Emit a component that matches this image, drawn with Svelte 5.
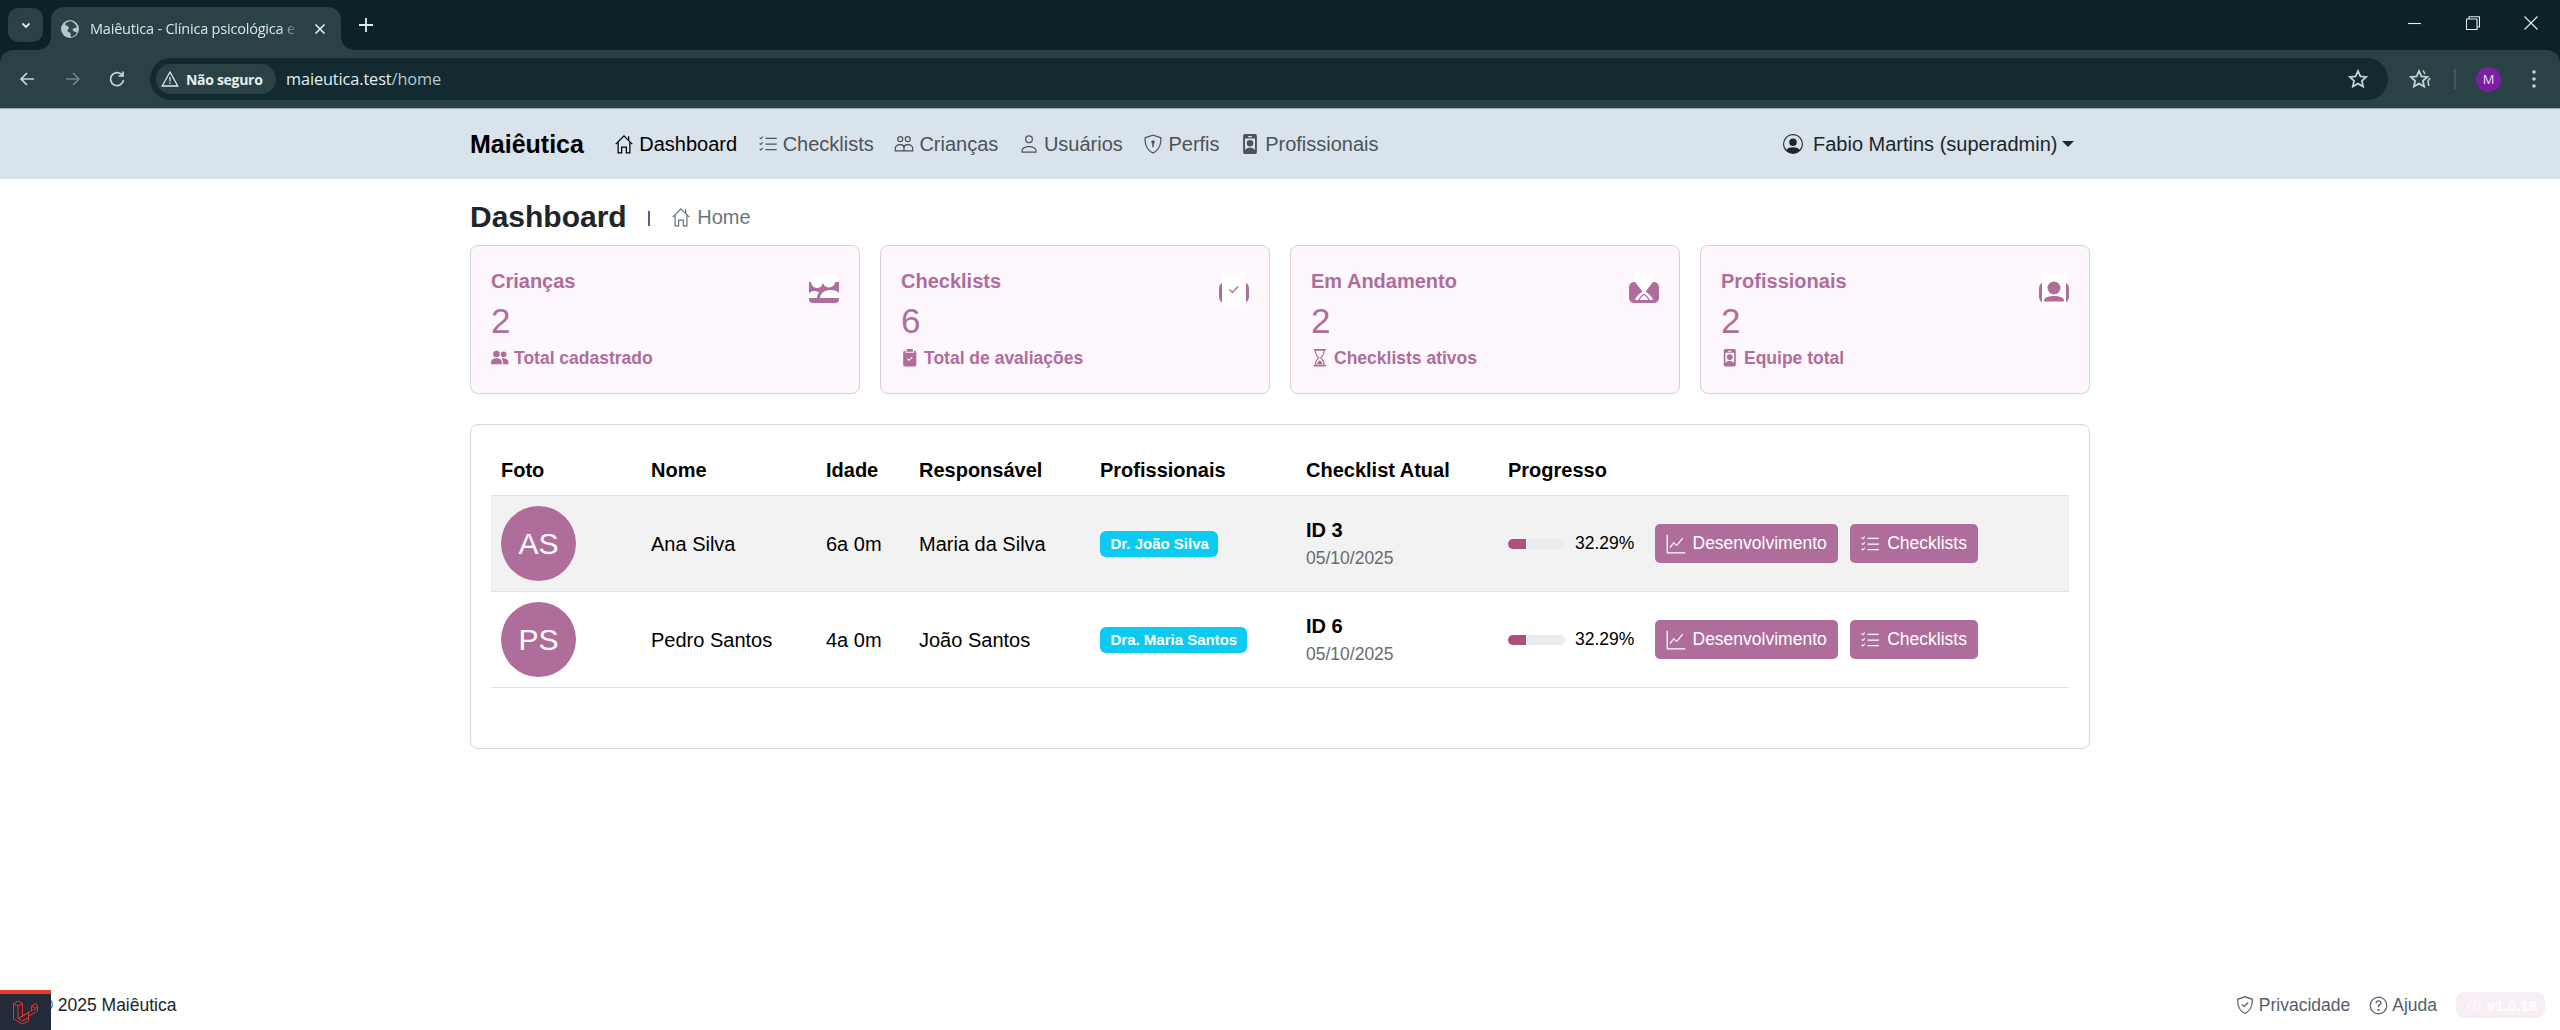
<script>
  const stats = [
    { t: 'Crianças', n: '2', s: 'Total cadastrado', i: 'people' },
    { t: 'Checklists', n: '6', s: 'Total de avaliações', i: 'clip' },
    { t: 'Em Andamento', n: '2', s: 'Checklists ativos', i: 'hour' },
    { t: 'Profissionais', n: '2', s: 'Equipe total', i: 'badge' }
  ];
  const rows = [
    { ini: 'AS', nome: 'Ana Silva', idade: '6a 0m', resp: 'Maria da Silva', prof: 'Dr. João Silva', id: 'ID 3' },
    { ini: 'PS', nome: 'Pedro Santos', idade: '4a 0m', resp: 'João Santos', prof: 'Dra. Maria Santos', id: 'ID 6' }
  ];
  const nav = [
    { l: 'Dashboard', i: 'house', active: true },
    { l: 'Checklists', i: 'list' },
    { l: 'Crianças', i: 'kids' },
    { l: 'Usuários', i: 'user' },
    { l: 'Perfis', i: 'shield' },
    { l: 'Profissionais', i: 'badgeSm' }
  ];
</script>

{#snippet icon(name, cls)}
  <svg class={cls} viewBox="0 0 16 16" fill="currentColor" aria-hidden="true">
    {#if name === 'house'}
      <path d="M8 .8 1 7.800l.6.6L2.800 7.300V15.500h3.800v-4.500h2.800v4.500h3.800V7.300l1.200 1.100.6-.6-2.800-2.800V1.800h-1v2.300L8 .8Zm0 1.300 4.200 4.200v8.200h-1.800V10H5.600v4.500H3.800V6.300L8 2.100Z"/>
    {:else if name === 'list'}
      <path d="M6 3h9v1H6zM6 7.500h9v1H6zM6 12h9v1H6z"/>
      <path d="m1 3.200.6-.6.6.6L3.600 1.800l.6.6-2 2zM1 7.700l.6-.6.6.6 1.400-1.400.6.6-2 2zM1 12.200l.6-.6.6.6 1.400-1.400.6.6-2 2z"/>
    {:else if name === 'kids'}
      <path fill-rule="evenodd" d="M5 1.500a2.500 2.500 0 1 1 0 5 2.500 2.500 0 0 1 0-5Zm0 1a1.500 1.500 0 1 0 0 3 1.500 1.500 0 0 0 0-3ZM11 1.500a2.500 2.500 0 1 1 0 5 2.500 2.500 0 0 1 0-5Zm0 1a1.500 1.500 0 1 0 0 3 1.500 1.500 0 0 0 0-3ZM.5 14v-2.500C.5 9.500 2.500 8 5 8c1.200 0 2.300.35 3 1 .7-.65 1.800-1 3-1 2.500 0 4.500 1.500 4.500 3.500V14H.5Zm1-1h6v-1.500C7.500 10 6.500 9 5 9s-3.500 1-3.500 2.500V13Zm7 0h6v-1.500C14.500 10 12.500 9 11 9s-2.500 1-2.500 2.500V13Z"/>
    {:else if name === 'user'}
      <path fill-rule="evenodd" d="M8 1a3.200 3.200 0 1 1 0 6.400A3.200 3.200 0 0 1 8 1Zm0 1a2.200 2.200 0 1 0 0 4.400A2.200 2.200 0 0 0 8 2ZM2 15v-1.900C2 10.800 4.800 9.500 8 9.500s6 1.300 6 3.600V15H2Zm1-1h10v-.9c0-1.400-2.200-2.600-5-2.600s-5 1.200-5 2.600v.9Z"/>
    {:else if name === 'shield'}
      <path fill-rule="evenodd" d="M8 .3 14.800 2.600c.3 5.300-1.300 10.500-6.800 13.100C2.500 13.100.9 7.900 1.200 2.600L8 .3Zm0 1.100L2.200 3.300c-.2 4.600 1.200 9 5.800 11.300 4.600-2.300 6-6.700 5.800-11.300L8 1.400Z"/>
      <circle cx="8" cy="6.300" r="1.400"/><rect x="7.400" y="7" width="1.200" height="3.500"/>
    {:else if name === 'shieldCheck'}
      <path fill-rule="evenodd" d="M8 .8 14.300 3c.3 4.800-1.200 9.800-6.300 12.200C2.900 12.800 1.400 7.800 1.700 3L8 .8Zm0 1.100L2.700 3.700c-.2 4.200 1.100 8.400 5.300 10.400 4.200-2 5.500-6.200 5.300-10.400L8 1.900Z"/>
      <path d="m5.200 7.800.7-.7 1.400 1.400 2.900-2.900.7.700-3.600 3.600z"/>
    {:else if name === 'badgeSm'}
      <path fill-rule="evenodd" d="M4 0h8a1.500 1.500 0 0 1 1.500 1.500v13A1.500 1.500 0 0 1 12 16H4a1.500 1.500 0 0 1-1.500-1.500v-13A1.500 1.500 0 0 1 4 0Zm2.500 1.500v1h3v-1h-3ZM4 3.500V12.800C5 11.500 6.400 11 8 11s3 .5 4 1.800V3.500H4Zm4 1.300a2.600 2.600 0 1 1 0 5.200 2.600 2.600 0 0 1 0-5.200Z"/>
    {:else if name === 'peopleFill'}
      <circle cx="5" cy="4.500" r="3"/><circle cx="11.500" cy="4.800" r="2.600"/>
      <path d="M0 14v-1.500C0 10 2 8.500 5 8.500s5 1.500 5 4V14H0ZM11 14v-1.500c0-1.500-.5-2.800-1.500-3.700.6-.2 1.300-.3 2-.3 2.500 0 4.500 1.500 4.500 3.800V14h-5Z"/>
    {:else if name === 'clipFill'}
      <path fill-rule="evenodd" d="M6 0h4a1 1 0 0 1 1 1v1.500H5V1a1 1 0 0 1 1-1ZM4 1.500V3.500h8v-2h.5A1.500 1.500 0 0 1 14 3v11.500a1.500 1.500 0 0 1-1.500 1.500h-9A1.500 1.500 0 0 1 2 14.500V3a1.500 1.500 0 0 1 1.500-1.500H4Zm6.600 6.200-.7-.7-2.600 2.600-1.200-1.200-.7.700 1.900 1.900 3.300-3.300Z"/>
    {:else if name === 'hourFill'}
      <path d="M2.500 0h11v1.500h-1c0 3-1.500 5.300-3 6.500 1.500 1.200 3 3.500 3 6.500h1V16h-11v-1.500h1c0-3 1.500-5.300 3-6.500-1.500-1.200-3-3.500-3-6.500h-1V0Zm2.100 1.500c0 2.700 1.400 4.800 2.900 6 .4.300.4.700 0 1-1.500 1.200-2.900 3.300-2.900 6h6.800c0-2.700-1.400-4.800-2.900-6-.4-.3-.4-.7 0-1 1.500-1.200 2.900-3.300 2.900-6H4.600Zm.9 12.500c.2-1.500 1.300-2.900 2.500-3.700 1.200.8 2.300 2.200 2.500 3.700h-5Z"/>
    {:else if name === 'chart'}
      <path d="M.5.500h1V14.500h14v1H.5z"/>
      <path d="m3.500 11.300-.7-.7 3.400-4.400 2.300 2.300L13 3l.8.6L8.600 9.700 6.300 7.500z"/>
    {:else if name === 'personCircle'}
      <path fill-rule="evenodd" d="M8 0a8 8 0 1 1 0 16A8 8 0 0 1 8 0Zm0 1a7 7 0 0 0-5.300 11.600C3.700 11.100 5.700 10.500 8 10.500s4.300.6 5.300 2.100A7 7 0 0 0 8 1Zm0 2.500a3 3 0 1 1 0 6 3 3 0 0 1 0-6Z"/>
    {:else if name === 'help'}
      <path fill-rule="evenodd" d="M8 .5a7.500 7.500 0 1 1 0 15 7.500 7.500 0 0 1 0-15Zm0 1a6.500 6.500 0 1 0 0 13 6.500 6.500 0 0 0 0-13Z"/>
      <path d="M5.400 6c0-1.500 1.100-2.400 2.600-2.400s2.600.9 2.600 2.200c0 1-.6 1.500-1.300 2-.6.400-.8.700-.8 1.300v.3H7.400V9c0-1 .4-1.500 1.100-2 .6-.4.9-.7.900-1.200 0-.6-.6-1.100-1.400-1.100s-1.400.5-1.400 1.300H5.400Z"/>
      <circle cx="8" cy="11.700" r=".9"/>
    {:else if name === 'code'}
      <path d="M5 4.500 1.500 8 5 11.500l-.7.700L.1 8l4.200-4.200zM11 4.500 14.500 8 11 11.500l.7.700L15.900 8l-4.200-4.200zM9.500 2l1 .2L6.500 14l-1-.2z"/>
    {/if}
  </svg>
{/snippet}

{#snippet statIcon(name)}
  <svg class="stat-icon" viewBox="0 0 30 36" aria-hidden="true">
    {#if name === 'people'}
      <path class="mv" d="M0 9h30v17a4 4 0 0 1-4 4H4a4 4 0 0 1-4-4z"/>
      <circle class="wh" cx="8" cy="9" r="6"/><circle class="wh" cx="20" cy="8" r="6.500"/>
      <path class="wh" d="M11 25c0-4 4-8 10-8s9 2 9 4v4z"/>
      <path class="wh" d="M0 25v-4c0-1 2-3 5-3 2 0 4 .5 5 1.500-1 1-2 3-2 5.500z"/>
    {:else if name === 'clip'}
      <rect class="mv" x="0" y="9" width="30" height="21" rx="6"/>
      <rect class="wh" x="3" y="0" width="24" height="32" rx="3"/>
      <path class="ck" d="m10.500 16.500 3 3 5.500-6"/>
    {:else if name === 'hour'}
      <rect class="mv" x="0" y="9" width="30" height="21" rx="5"/>
      <path class="wh" d="M6 0h18v9H6z"/>
      <path class="wh" d="M6 9h18L16.500 18.500c4 2.500 7 6 7.500 8.500H6c.5-2.500 3.500-6 7.500-8.500z"/>
      <path class="mv" d="M15 20.500c-3 2-5 4.200-5.600 6.500h1.400c.8-2 2.400-3.800 4.200-5 1.800 1.200 3.400 3 4.200 5h1.400c-.6-2.300-2.600-4.500-5.600-6.500z"/>
    {:else if name === 'badge'}
      <rect class="mv" x="0" y="9" width="30" height="21" rx="6"/>
      <rect class="wh" x="3" y="0" width="24" height="32" rx="3"/>
      <circle class="mv" cx="15" cy="15" r="6.500"/>
      <path class="mv" d="M5 28.500v-1c0-3 4.500-4.500 10-4.500s10 1.500 10 4.500v1z"/>
    {/if}
  </svg>
{/snippet}

<div class="page">
  <header class="chrome">
    <div class="tabstrip">
      <button class="tabsearch" aria-label="Pesquisar guias">
        <svg viewBox="0 0 12 12" width="12" height="12"><path d="M2.500 4.500 6 8l3.500-3.500" fill="none" stroke="#e2ecee" stroke-width="1.800"/></svg>
      </button>
      <div class="tab">
        <svg class="favicon" viewBox="0 0 18 18"><circle cx="9" cy="9" r="9" fill="#b8c6c9"/><path d="M9 1c-2 1-4 1.500-5 3 1 2 3 2 4 3.500C8 9 6 9.500 6.500 11c1 1.500 2.500 1 3 2.500.3 1.200 0 2.500.3 3.500 3-.5 5-2 6-4.500-1.500-1-3-.5-4-2-.8-1.200.5-2.500 2-2.500.8 0 1.700-.5 2-1-1-3-3.800-5.500-6.800-6z" fill="#2a4146" opacity=".95"/></svg>
        <span class="tab-title">Maiêutica - Clínica psicológica e</span>
        <svg class="tab-x" viewBox="0 0 12 12" width="12" height="12"><path d="M1.500 1.500l9 9M10.500 1.500l-9 9" stroke="#e2ecee" stroke-width="1.700"/></svg>
      </div>
      <svg class="newtab" viewBox="0 0 14 14" width="14" height="14"><path d="M7 0v14M0 7h14" stroke="#e2ecee" stroke-width="1.800"/></svg>
      <div class="win">
        <svg viewBox="0 0 14 14" width="14" height="14"><path d="M0 7.500h13" stroke="#e8eeee" stroke-width="1.100"/></svg>
        <svg viewBox="0 0 14 14" width="14" height="14"><path d="M.5 3h10.500v10.500H.5zM3 3V.7h10.500v10.300H11" fill="none" stroke="#e8eeee" stroke-width="1.100"/></svg>
        <svg viewBox="0 0 14 14" width="14" height="14"><path d="M.5.5l13 13M13.500.5l-13 13" stroke="#e8eeee" stroke-width="1.100"/></svg>
      </div>
    </div>
    <div class="toolbar">
      <svg class="tb" viewBox="0 0 18 18"><path d="M16 9H3M9 3 3 9l6 6" fill="none" stroke="#c9d6d8" stroke-width="1.700"/></svg>
      <svg class="tb" viewBox="0 0 18 18"><path d="M2 9h13M9 3l6 6-6 6" fill="none" stroke="#6f8286" stroke-width="1.700"/></svg>
      <svg class="tb" viewBox="0 0 18 18"><path d="M14.500 5.500A6.500 6.500 0 1 0 15.500 10M15 1.500v4.500h-4.500" fill="none" stroke="#c9d6d8" stroke-width="1.700"/></svg>
      <div class="omni">
        <div class="chip">
          <svg viewBox="0 0 18 18" width="18" height="18"><path d="M9 2 1.200 16h15.600zM9 7v4.500M9 12.500v1.500" fill="none" stroke="#dfe8ea" stroke-width="1.300"/></svg>
          <span>Não seguro</span>
        </div>
        <span class="url"><span class="host">maieutica.test</span>/home</span>
        <svg class="star" viewBox="0 0 20 20"><path d="M10 2l2.400 5.300 5.800.6-4.300 3.900 1.200 5.700L10 14.600l-5.100 2.900 1.200-5.700L1.800 7.900l5.800-.6z" fill="none" stroke="#c4d2d4" stroke-width="1.800"/></svg>
      </div>
      <svg class="starlist" viewBox="0 0 24 20"><path d="M10 2l2.400 5.300 5.800.6-4.300 3.900 1.200 5.700L10 14.600l-5.100 2.900 1.200-5.700L1.800 7.900l5.800-.6z" fill="none" stroke="#c4d2d4" stroke-width="1.800"/><path d="M14 1.500l2 3.500M21 9l-2 3 .8 5" fill="none" stroke="#c4d2d4" stroke-width="1.500"/></svg>
      <span class="tb-sep"></span>
      <span class="profile">M</span>
      <svg class="dots" viewBox="0 0 4 18"><circle cx="2" cy="2" r="1.800"/><circle cx="2" cy="9" r="1.800"/><circle cx="2" cy="16" r="1.800"/></svg>
    </div>
  </header>

  <nav class="navbar">
    <div class="container nav-inner">
      <span class="brand">Maiêutica</span>
      <ul class="links">
        {#each nav as n}
          <li class:active={n.active}>{@render icon(n.i, 'ic')}<span>{n.l}</span></li>
        {/each}
      </ul>
      <div class="usermenu">
        {@render icon('personCircle', 'ic')}
        <span>Fabio Martins (superadmin)</span>
        <i class="caret"></i>
      </div>
    </div>
  </nav>

  <main class="container main">
    <div class="title-row">
      <h1>Dashboard</h1>
      <span class="vr"></span>
      <span class="crumb">{@render icon('house', 'ic')}Home</span>
    </div>

    <section class="stats">
      {#each stats as s}
        <article class="stat">
          <div class="stat-text">
            <div class="stat-title">{s.t}</div>
            <div class="stat-num">{s.n}</div>
            <div class="stat-sub">
              {@render icon(s.i === 'people' ? 'peopleFill' : s.i === 'clip' ? 'clipFill' : s.i === 'hour' ? 'hourFill' : 'badgeSm', 'ic-sm')}
              <span>{s.s}</span>
            </div>
          </div>
          {@render statIcon(s.i)}
        </article>
      {/each}
    </section>

    <section class="tablecard">
      <table>
        <colgroup>
          <col style="width:150px" /><col style="width:175px" /><col style="width:93px" /><col style="width:181px" /><col style="width:206px" /><col style="width:202px" /><col style="width:147px" /><col />
        </colgroup>
        <thead>
          <tr><th>Foto</th><th>Nome</th><th>Idade</th><th>Responsável</th><th>Profissionais</th><th>Checklist Atual</th><th>Progresso</th><th></th></tr>
        </thead>
        <tbody>
          {#each rows as r, idx}
            <tr class:odd={idx === 0}>
              <td><span class="avatar">{r.ini}</span></td>
              <td class="txt">{r.nome}</td>
              <td class="txt">{r.idade}</td>
              <td class="txt">{r.resp}</td>
              <td><span class="badge">{r.prof}</span></td>
              <td class="txt cl"><strong>{r.id}</strong><small>05/10/2025</small></td>
              <td colspan="2">
                <div class="prog-actions">
                  <div class="track"><div class="fill" style="width:32.29%"></div></div>
                  <span class="pct">32.29%</span>
                  <button class="btn first">{@render icon('chart', 'ic-btn')}Desenvolvimento</button>
                  <button class="btn">{@render icon('list', 'ic-btn')}Checklists</button>
                </div>
              </td>
            </tr>
          {/each}
        </tbody>
      </table>
    </section>
  </main>

  <footer class="footer">
    <span class="copy">© 2025 Maiêutica</span>
    <div class="foot-right">
      <span class="flink">{@render icon('shieldCheck', 'ic-shield')}Privacidade</span>
      <span class="flink">{@render icon('help', 'ic-help')}Ajuda</span>
      <span class="version">{@render icon('code', 'ic-ver')}v1.0.18</span>
    </div>
  </footer>

  <div class="debugbar">
    <svg viewBox="0 0 26 26" width="27" height="26" fill="none" stroke="#e3382b" stroke-width="1" stroke-linejoin="round">
      <path d="M1 4.500 5.500 2 10 4.500V17l9-5.200V7l4.500-2.500L25 7v5l-9 5.200v4.600L10 25 1 20z"/>
      <path d="M1 4.500 5.500 7 10 4.500M5.500 7v12.500L10 22l6-3.200M5.500 19.500 16 13.800M10 17l-4.500 2.500M19 7l4.500 2.500L25 7M19 7v4.800l4.500-2.300M16 12.800V17"/>
    </svg>
  </div>
</div>

<style>
  :global(body) { margin: 0; background: #fff; font-family: "Liberation Sans", Arial, sans-serif; color: #212529; }
  * { box-sizing: border-box; }
  .page { min-height: 1030px; display: flex; flex-direction: column; position: relative; overflow: hidden; }

  .chrome { background: #0b2328; height: 109px; flex: none; font-family: "Open Sans", sans-serif; }
  .tabstrip { height: 50px; display: flex; align-items: flex-start; padding-left: 8px; position: relative; }
  .tabsearch { width: 35px; height: 34px; margin-top: 8px; border: 0; border-radius: 10px; background: #2a4146; display: flex; align-items: center; justify-content: center; padding: 0; }
  .tab { width: 290px; height: 43px; margin: 7px 0 0 8px; background: #2a4146; border-radius: 13px 13px 0 0; display: flex; align-items: center; padding: 0 15px 0 10px; position: relative; }
  .tab::before, .tab::after { content: ""; position: absolute; bottom: 0; width: 13px; height: 13px; background: radial-gradient(circle at 0 0, transparent 12.5px, #2a4146 13px); }
  .tab::before { left: -13px; }
  .tab::after { right: -13px; background: radial-gradient(circle at 100% 0, transparent 12.5px, #2a4146 13px); }
  .favicon { width: 18px; height: 18px; flex: none; }
  .tab-title { margin-left: 11px; width: 211px; font-size: 14.5px; color: #dbe5e7; white-space: nowrap; overflow: hidden; -webkit-mask-image: linear-gradient(90deg, #000 190px, transparent 210px); mask-image: linear-gradient(90deg, #000 190px, transparent 210px); letter-spacing: -.2px; }
  .tab-x { margin-left: 14px; flex: none; }
  .newtab { margin: 18px 0 0 18px; }
  .win { position: absolute; right: 22px; top: 16px; display: flex; gap: 44px; }
  .toolbar { height: 59px; background: #2a4146; border-radius: 13px 13px 0 0; border-bottom: 1px solid #9fb0b4; display: flex; align-items: center; padding: 0 24px 0 18px; }
  .tb { width: 18px; height: 18px; flex: none; margin-right: 28px; }
  .tb:nth-child(2) { margin-right: 26px; }
  .tb:nth-child(3) { margin-right: 24px; }
  .omni { flex: 1; height: 42px; background: #132b30; border-radius: 21px; display: flex; align-items: center; padding: 0 20px 0 6px; }
  .chip { height: 30px; width: 120px; border-radius: 15px; background: #2a4146; display: flex; align-items: center; padding-left: 5px; gap: 7px; color: #e6eef0; font-weight: 700; font-size: 14px; flex: none; letter-spacing: -.3px; white-space: nowrap; }
  .url { margin-left: 10px; font-size: 16.3px; color: #b9c7ca; letter-spacing: -.1px; }
  .host { color: #e6eef0; }
  .star { width: 20px; height: 20px; margin-left: auto; }
  .starlist { width: 24px; height: 20px; margin-left: 21px; flex: none; }
  .tb-sep { width: 2px; height: 20px; background: #46595d; margin-left: 21px; flex: none; }
  .profile { width: 25px; height: 25px; border-radius: 50%; background: #7b1fa2; color: #eed9f5; font-size: 13px; display: flex; align-items: center; justify-content: center; margin-left: 20px; flex: none; }
  .dots { width: 4px; height: 18px; margin-left: 31px; fill: #c4d2d4; flex: none; }

  .container { width: 1620px; margin: 0 auto; }
  .navbar { background: #d8e3ec; height: 70px; flex: none; }
  .nav-inner { height: 70px; display: flex; align-items: center; font-size: 20px; }
  .brand { font-size: 25px; font-weight: 700; color: #000; margin-right: 20px; }
  .links { display: flex; list-style: none; margin: 0; padding: 0; }
  .links li { display: flex; align-items: center; gap: 5px; padding: 0 10.3px 0 10.3px; color: #4f5357; white-space: nowrap; }
  .links li.active { color: #000; }
  .ic { width: 20px; height: 20px; flex: none; }
  .usermenu { margin-left: auto; margin-right: 16px; display: flex; align-items: center; gap: 10px; color: #212529; }
  .caret { width: 0; height: 0; border: 6px solid transparent; border-top-color: #212529; border-bottom: 0; margin-left: -5.5px; }

  .main { flex: 1; }
  .title-row { height: 66px; padding-top: 10px; display: flex; align-items: center; }
  h1 { margin: 0; font-size: 30px; font-weight: 700; color: #212529; }
  .vr { width: 2px; height: 15px; background: #51647a; margin: 3px 21.5px 0 21px; }
  .crumb { display: flex; align-items: center; gap: 6px; font-size: 20px; color: #6c757d; }

  .stats { display: grid; grid-template-columns: repeat(4, 1fr); gap: 20px; }
  .stat { height: 149px; background: #fef7fd; border: 1px solid #d9cfd7; border-radius: 8px; padding: 20px; display: flex; justify-content: space-between; align-items: flex-start; color: #ae6d9a; }
  .stat-title { font-size: 20px; font-weight: 700; line-height: 30px; }
  .stat-num { font-size: 35px; line-height: 42px; margin-top: 4px; }
  .stat-sub { font-size: 17.5px; font-weight: 700; display: flex; align-items: center; gap: 5.5px; line-height: 26px; margin-top: 3px; }
  .ic-sm { width: 17.5px; height: 17.5px; flex: none; }
  .stat-icon { width: 30px; height: 36px; margin: 7px 0 0 0; flex: none; }
  .stat-icon .mv { fill: #ae6d9a; }
  .stat-icon .wh { fill: #fff; }
  .stat-icon .ck { fill: none; stroke: #ae6d9a; stroke-width: 1.300; }

  .tablecard { margin-top: 30px; height: 325px; border: 1px solid #d5d8db; border-radius: 8px; padding: 20px; }
  table { width: 100%; border-collapse: collapse; table-layout: fixed; color: #000; font-size: 20px; }
  th { text-align: left; font-weight: 700; padding: 10px; line-height: 30px; border-bottom: 1px solid #dee2e6; white-space: nowrap; height: 50px; }
  td { padding: 10px; vertical-align: middle; border-bottom: 1px solid #dee2e6; height: 96px; white-space: nowrap; }
  td.txt { padding-top: 12px; padding-bottom: 10px; }
  tr.odd td { background: #f2f2f2; }
  .avatar { width: 75px; height: 75px; border-radius: 50%; background: #ae6d9a; color: #fff; font-size: 30px; display: flex; align-items: center; justify-content: center; }
  .badge { display: inline-block; background: #0dcaf0; color: #fff; font-size: 15px; font-weight: 700; line-height: 26px; height: 26px; padding: 0 9.5px 0 10.5px; border-radius: 6px; vertical-align: middle; }
  .cl strong { display: block; font-weight: 700; line-height: 28px; margin-top: -2px; }
  .cl small { display: block; font-size: 17.5px; color: #666c72; line-height: 28px; }
  .prog-actions { display: flex; align-items: center; }
  .track { width: 57px; height: 10px; background: #e9ecef; border-radius: 6px; overflow: hidden; flex: none; }
  .fill { height: 100%; background: #a9527f; }
  .pct { font-size: 17.5px; margin-left: 10px; width: 60px; }
  .btn { height: 39px; margin-left: 12px; padding: 0 11px 0 10.5px; background: #ae6d9a; border: 0; border-radius: 5px; color: #fff; font: 17.5px "Liberation Sans", Arial, sans-serif; display: flex; align-items: center; gap: 7px; white-space: nowrap; }
  .btn.first { margin-left: 20px; }
  .ic-btn { width: 20px; height: 20px; flex: none; }

  .footer { flex: none; height: 50px; display: flex; align-items: center; justify-content: space-between; padding: 0 15px 0 40px; font-size: 17.5px; }
  .copy { color: #212529; }
  .foot-right { display: flex; align-items: center; color: #555e68; }
  .flink { display: flex; align-items: center; gap: 4px; margin-right: 19px; }
  .ic-shield { width: 20px; height: 20px; flex: none; }
  .ic-help { width: 19px; height: 19px; flex: none; }
  .version { display: flex; align-items: center; gap: 5px; height: 26px; width: 89px; padding-left: 11px; background: #f7eff5; border-radius: 8px; color: #fff; font-weight: 700; font-size: 15px; }
  .ic-ver { width: 15px; height: 15px; flex: none; }
  .debugbar { position: absolute; left: 0; bottom: 0; width: 51px; height: 40px; background: #232b38; border-top: 4px solid #e83d2e; display: flex; align-items: center; justify-content: center; }
</style>
